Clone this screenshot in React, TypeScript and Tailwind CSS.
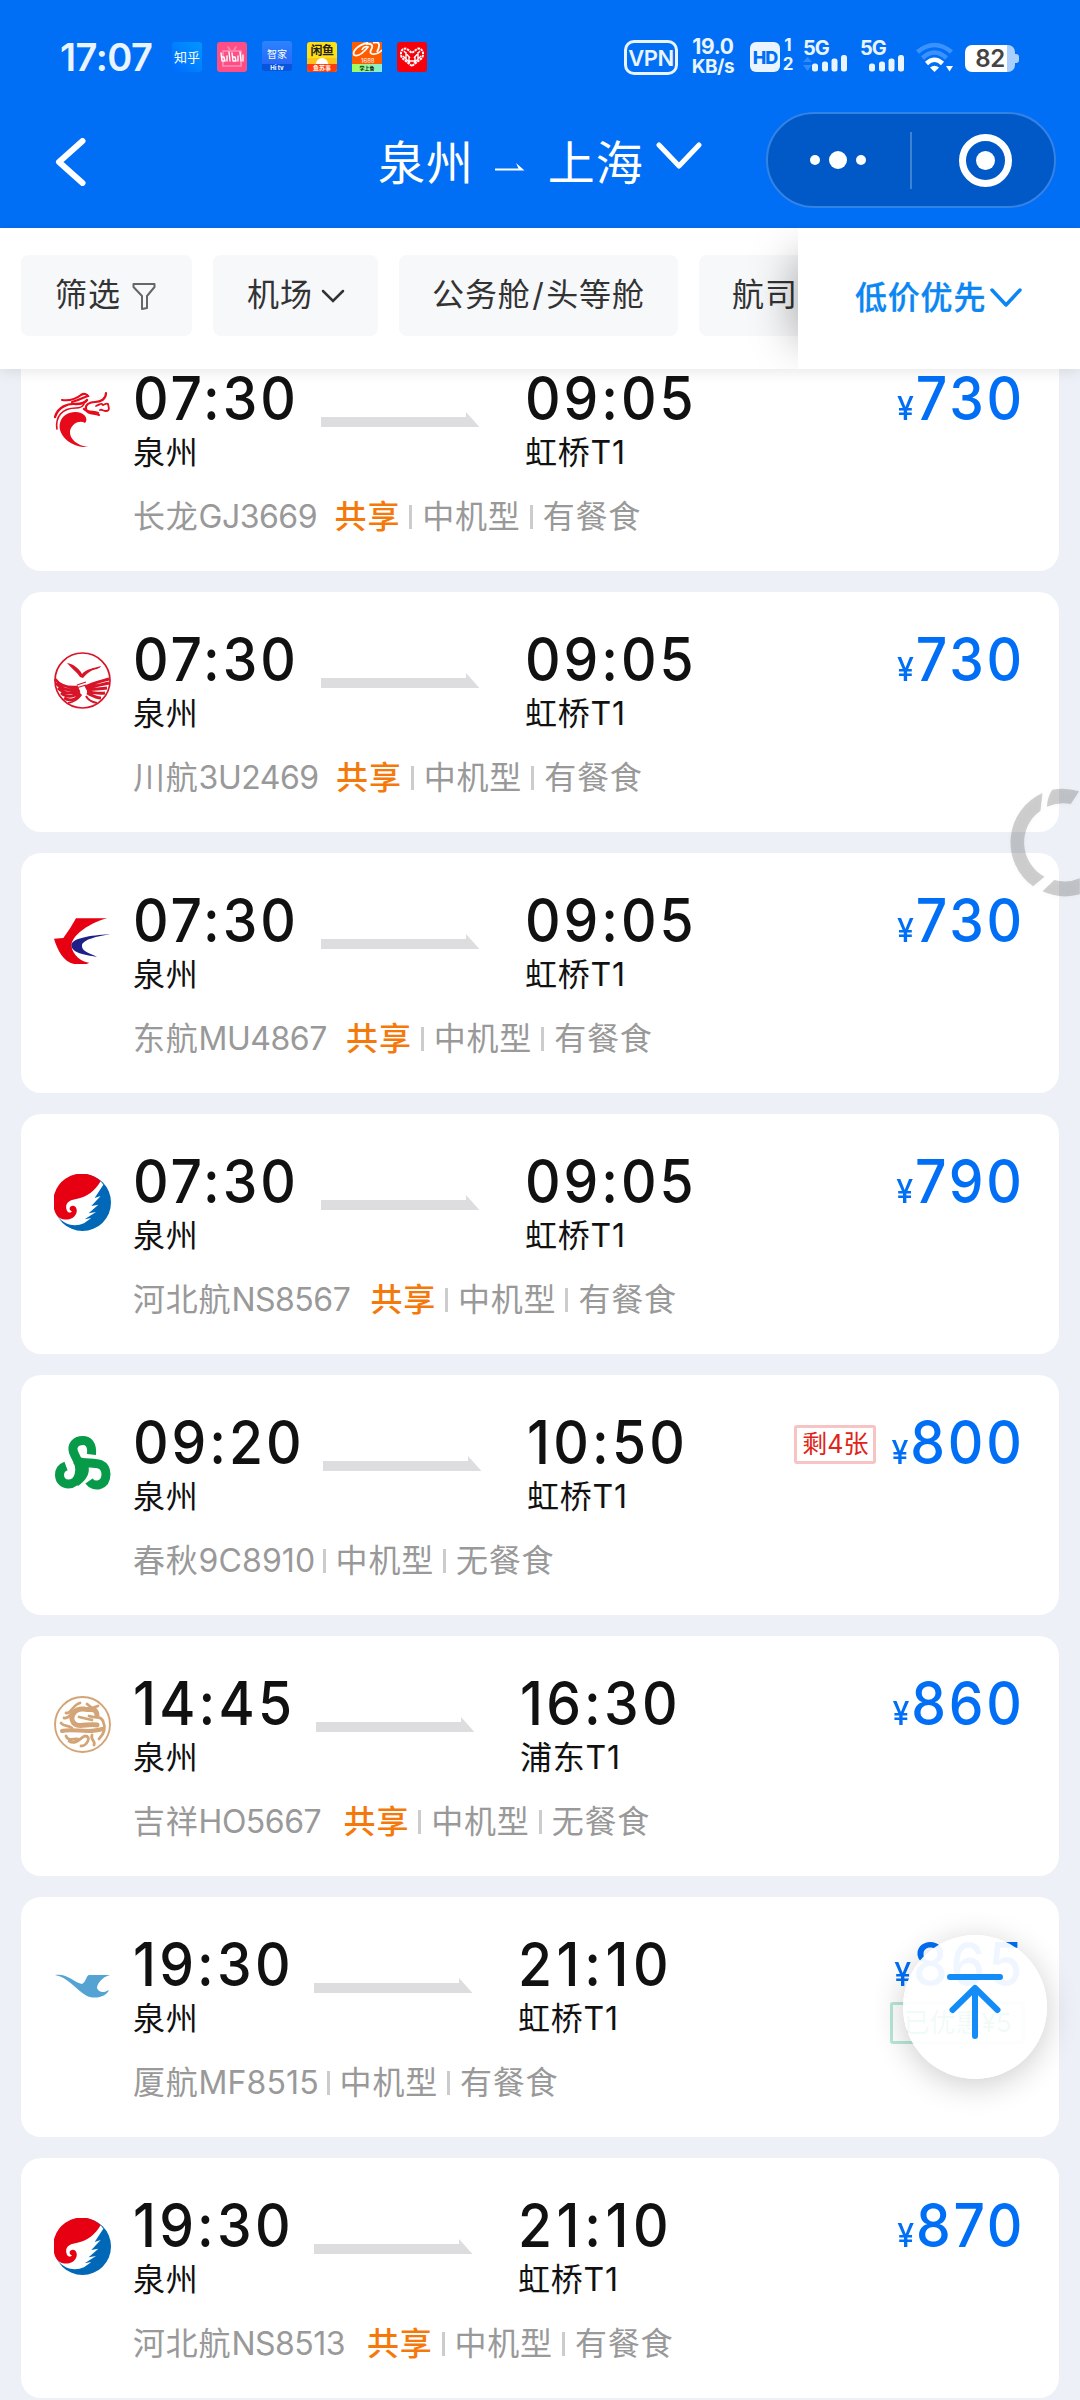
import React from "react";

type Airline = "loong" | "sichuan" | "eastern" | "hebei" | "spring" | "juneyao" | "xiamen";

type Flight = {
  airline: Airline;
  depart: string;
  arrive: string;
  port: string;
  carrier: string;
  code: string;
  codeWidth: number;
  departWidth: number;
  shared: boolean;
  meal: string;
  price: string;
  left?: string;
  discount?: string;
};

const flights: Flight[] = [
  { airline: "loong", depart: "07:30", arrive: "09:05", port: "虹桥T1", carrier: "长龙", code: "GJ3669", codeWidth: 116, departWidth: 188, shared: true, meal: "有餐食", price: "730" },
  { airline: "sichuan", depart: "07:30", arrive: "09:05", port: "虹桥T1", carrier: "川航", code: "3U2469", codeWidth: 117.5, departWidth: 188, shared: true, meal: "有餐食", price: "730" },
  { airline: "eastern", depart: "07:30", arrive: "09:05", port: "虹桥T1", carrier: "东航", code: "MU4867", codeWidth: 127.5, departWidth: 188, shared: true, meal: "有餐食", price: "730" },
  { airline: "hebei", depart: "07:30", arrive: "09:05", port: "虹桥T1", carrier: "河北航", code: "NS8567", codeWidth: 119, departWidth: 188, shared: true, meal: "有餐食", price: "790" },
  { airline: "spring", depart: "09:20", arrive: "10:50", port: "虹桥T1", carrier: "春秋", code: "9C8910", codeWidth: 115, departWidth: 190, shared: false, meal: "无餐食", price: "800", left: "剩4张" },
  { airline: "juneyao", depart: "14:45", arrive: "16:30", port: "浦东T1", carrier: "吉祥", code: "HO5667", codeWidth: 125, departWidth: 183, shared: true, meal: "无餐食", price: "860" },
  { airline: "xiamen", depart: "19:30", arrive: "21:10", port: "虹桥T1", carrier: "厦航", code: "MF8515", codeWidth: 119, departWidth: 181, shared: false, meal: "有餐食", price: "865", discount: "已优惠¥5" },
  { airline: "hebei", depart: "19:30", arrive: "21:10", port: "虹桥T1", carrier: "河北航", code: "NS8513", codeWidth: 115.5, departWidth: 181, shared: true, meal: "有餐食", price: "870" },
];

function Logo({ airline }: { airline: Airline }) {
  const cls = "h-[57px] w-[57px] shrink-0";
  switch (airline) {
    case "loong":
      return (
        <svg viewBox="0 0 57 57" className={cls} fill="none" stroke="#e60a1b" strokeLinecap="round">
          <path d="M34 56C16 57 3 43 6 32C8 22 20 19 27 22C32 24 34 29 31 32C26 29 18 32 16 40C15 48 24 55 34 56Z" fill="#e60a1b" stroke="none" />
          <path d="M3 38C1 26 8 17 22 17C26 17 29 15 30 13" strokeWidth="1.600" />
          <path d="M1 26C4 16 14 12 22 13C27 13 31 12 33 9" strokeWidth="2.400" />
          <path d="M8 9C16 10 22 8 27 4C30 2 33 3 34 5C30 6 26 9 18 11" strokeWidth="2.200" />
          <path d="M52 2C52 8 47 11 41 11C35 11 31 14 32 18C33 23 39 22 45 24" strokeWidth="2.200" />
          <path d="M30 18C34 22 40 20 44 22" strokeWidth="2.400" />
          <path d="M42 15C45 14 47 12 48 13C49 16 52 11 54 13C55 17 56 20 52 20C49 20 48 18 46 19" strokeWidth="1.800" />
        </svg>
      );
    case "sichuan":
      return (
        <svg viewBox="0 0 57 57" className={cls} fill="none" stroke="#d81528">
          <circle cx="28.500" cy="28.500" r="27.500" strokeWidth="1.700" />
          <path d="M13 11C19 12 25 16 28 22C32 17 40 16 47 14C46 17 41 17 37 19C33 21 31 24 29 26L26 25C23 20 18 17 13 11Z" fill="#d81528" stroke="none" />
          <path d="M1 27C6 34 14 36 24 35M2 31C8 38 15 39 25 37M4 36C10 42 16 42 26 39M7 41C13 46 18 45 26 41M10 46C16 50 21 48 27 42M55 27C48 29 38 31 31 35M55 31C48 33 38 34 32 37M53 36C46 37 38 37 33 38M51 41C44 42 38 40 33 40M47 46C42 46 37 43 33 41" strokeWidth="2.900" />
          <path d="M23 33L32 30M22 36L32 33" strokeWidth="1.200" />
          <path d="M14 51C20 50 24 47 27 43M43 51C37 50 34 48 32 44" strokeWidth="2" />
        </svg>
      );
    case "eastern":
      return (
        <svg viewBox="0 0 171 171" className={cls}>
          <path d="M0 77L28 75Q50 46 66 16H160C112 28 54 64 52 98C56 128 84 147 106 149L98 153H60C28 146 10 110 0 77Z" fill="#e60012" />
          <path d="M170 63C130 66 50 72 52 98C54 118 90 126 129 131C101 121 82 112 84 97C86 80 130 70 170 63Z" fill="#1d2088" />
        </svg>
      );
    case "hebei":
      return (
        <svg viewBox="0 0 171 171" className={cls}>
          <circle cx="85.500" cy="85.500" r="85.500" fill="#0068b7" />
          <path d="M4 116C22 150 58 162 90 148L112 132L92 136L126 114L104 118L133 92L112 96L140 66L122 72L148 32L140 22C100 60 30 60 16 110Z" fill="#fff" />
          <path d="M140 21A85 85 0 0 0 4 116C14 142 54 144 66 120C74 102 60 90 49 98C44 104 48 111 54 112C50 119 39 116 37 104C33 84 50 77 70 74C100 68 124 50 140 21Z" fill="#e60012" />
        </svg>
      );
    case "spring":
      return (
        <svg viewBox="0 0 57 57" className={cls} fill="none" stroke="#079a48" strokeWidth="9">
          <path d="M37.500 19.500C38.500 9 34 5.500 29 5.500C21 5.500 17.500 11 19.500 17C22 24 28 30 25 40C22 52 6 52 5.500 40C5.500 35 8 32.500 12 31" />
          <path d="M22 25C31 32 51 22 52 39C52 51 40 53 35 46" />
          <path d="M31 31C33 40 25 46 22 48" strokeWidth="7" />
        </svg>
      );
    case "juneyao":
      return (
        <svg viewBox="0 0 57 57" className={cls} fill="none" stroke="#d3a576" strokeLinecap="round">
          <circle cx="28.500" cy="28.500" r="27.500" strokeWidth="1.900" />
          <path d="M43 19C42 10 34 15 30 13C20 12 16 21 19 26C23 33 34 27 43 29" strokeWidth="5" />
          <path d="M8 35C20 32 34 38 48 33" strokeWidth="4" />
          <path d="M12 17C18 18 18 9 26 7M10 22C16 23 17 16 23 15M33 8L38 12L44 10M35 20C42 23 46 19 49 25C52 32 50 38 45 43M7 27C10 31 14 29 18 32M12 40C14 46 20 42 24 43M15 45C22 50 28 40 31 40C38 40 33 50 27 50M38 39C36 44 42 45 40 49M25 21L38 24" strokeWidth="2.800" />
        </svg>
      );
    case "xiamen":
      return (
        <svg viewBox="0 0 57 57" className={cls}>
          <path d="M1 18C13 16 21 26 28 27C32 25 32 19 35 18H56C48 20 43 27 43 31C45 36 50 36 55 33C53 39 42 43 33 39C22 33 14 20 1 18Z" fill="#54a3d2" />
        </svg>
      );
  }
}

function FlightArrow() {
  return (
    <svg viewBox="0 0 158 15" className="mt-[81px] h-[15px] w-[158px] shrink-0" fill="#dddddf">
      <path d="M0 5H145V0L158.500 15H0Z" />
    </svg>
  );
}

function Divider() {
  return <span className="ml-[9px] mr-[10px] h-6 w-[3px] shrink-0 bg-[#cccccc]" />;
}

// The digit "1" is narrow, so times that hold two of them get wider tracking.
const timeTracking = ["tracking-[3.200px]", "tracking-[3.500px]", "tracking-[5px]"];

function Time({ value }: { value: string }) {
  const ones = Math.min(value.split("1").length - 1, 2);
  return (
    <div
      className={
        "w-0 origin-left scale-x-[0.92] whitespace-nowrap text-[60px] font-medium leading-[60px] [font-feature-settings:'calt'_0] " +
        timeTracking[ones]
      }
    >
      {value}
    </div>
  );
}

function FlightCard({ flight }: { flight: Flight }) {
  return (
    <article className="flex h-[240px] shrink-0 rounded-[20px] bg-white pl-[33px] pr-9">
      <div className="pt-[60px]">
        <Logo airline={flight.airline} />
      </div>
      <div className="ml-[21px] flex grow flex-col">
        <div className="flex h-[139px] items-start">
          <div className="ml-px shrink-0 pt-[37px]" style={{ width: flight.departWidth }}>
            <Time value={flight.depart} />
            <div className="mt-[9px] leading-8 tracking-[0.800px]">泉州</div>
          </div>
          <FlightArrow />
          <div className="ml-[46px] shrink-0 pt-[37px]">
            <Time value={flight.arrive} />
            <div className="mt-[9px] leading-8 tracking-[0.800px]">{flight.port}</div>
          </div>
          <div className="ml-auto flex flex-col items-end pt-[37px] text-[#006ff6]">
            <div className="flex items-start">
              {flight.left && (
                <span className="mr-[4px] mt-[13px] flex h-[39px] w-[82px] items-center justify-center rounded-[3px] border-[3px] border-[#f7c3c3] text-[25px] leading-none text-[#df2417]">
                  {flight.left}
                </span>
              )}
              <span className="-mr-[2px] origin-right scale-x-[0.92] whitespace-nowrap text-[60px] font-medium leading-[60px] tracking-[3px]">
                <span className="mr-[2px] text-[33px] tracking-normal">¥</span>
                {flight.price}
              </span>
            </div>
            {flight.discount && (
              <span className="-mr-[2px] -mt-[2px] flex h-[42px] w-[135px] shrink-0 items-center justify-center whitespace-nowrap rounded-[3px] border-[3px] border-[#b8e8d5] text-[26px] leading-none text-[#08b172]">
                {flight.discount}
              </span>
            )}
          </div>
        </div>
        <div className="ml-px mt-[31px] flex h-8 items-center whitespace-nowrap leading-8 tracking-[0.800px] text-[#999999]">
          <span>{flight.carrier}</span>
          <span
            className={"shrink-0 " + (flight.shared ? "tracking-[-0.500px]" : "tracking-[0.100px]")}
            style={{ width: flight.codeWidth }}
          >
            {flight.code}
          </span>
          {flight.shared && <span className="ml-[20px] font-medium text-[#f5790a]">共享</span>}
          <Divider />
          <span>中机型</span>
          <Divider />
          <span>{flight.meal}</span>
        </div>
      </div>
    </article>
  );
}

function SignalBars({ data }: { data?: boolean }) {
  return (
    <div className="w-[44px] text-[#e9f4ff]">
      <div className="h-[15px] text-[20px] font-bold leading-[15px] tracking-[-1px]">5G</div>
      <svg viewBox="0 0 44 17" className="-mt-px h-[17px] w-[44px]" fill="currentColor">
        {data && <path d="M0 7L4.500 2L9 7ZM0 10H9L4.500 16Z" fill="#2f8bff" />}
        <rect x="9" y="8.500" width="6" height="8" rx="2.500" />
        <rect x="19" y="6.500" width="6" height="10" rx="2.500" />
        <rect x="28.500" y="3.500" width="6" height="13" rx="2.500" />
        <rect x="38" y="0" width="6" height="16.500" rx="2.500" />
      </svg>
    </div>
  );
}

function AppIcons() {
  return (
    <div className="ml-4 flex h-[30px] gap-[15px] text-center text-white">
      <span className="h-[30px] w-[30px] rounded-[3px] bg-gradient-to-tr from-[#006aff] to-[#0096ff] text-[13px] leading-[31px]">知乎</span>
      <svg viewBox="0 0 30 30" className="h-[30px] w-[30px]" fill="none" stroke="#fff" strokeLinecap="round" strokeLinejoin="round">
        <rect width="30" height="30" rx="3" fill="#ff4e86" stroke="none" />
        <path d="M6 9H24V24H6ZM11 5L13 8M19 5L17 8" stroke="#ff80a8" strokeWidth="2" />
        <path d="M4 11L5 19H8L7 15H5M10 14V19M12 10L13 19M15 11L16 19H19L18 15H16M21 14V19M23 10L24 19M26 13V19" strokeWidth="1.400" />
      </svg>
      <span className="flex h-[30px] w-[30px] -translate-y-px flex-col rounded-[3px] bg-gradient-to-b from-[#2c83ff] to-[#2860f4]">
        <span className="h-[23px] text-[10px] leading-[26px]">智家</span>
        <span className="h-[7px] rounded-b-[3px] bg-[#0755dc] text-[6px] font-bold leading-[7px]">Hi tv</span>
      </span>
      <span className="flex h-[30px] w-[30px] flex-col overflow-hidden rounded-[3px] bg-[#ffe014] font-bold">
        <span className="h-4 whitespace-nowrap text-[12px] leading-[17px] tracking-[-0.500px] text-[#222]">闲鱼</span>
        <span className="flex h-[6px] justify-center bg-[#ffc21c]"><i className="h-[6px] w-[12px] rounded-t-full bg-white" /></span>
        <span className="h-2 bg-[#ff3d0c] text-[6px] leading-2">鱼苏事</span>
      </span>
      <span className="flex h-[30px] w-[30px] flex-col bg-[#ff5c00]">
        <svg viewBox="0 0 30 22" className="h-[22px] w-[30px]" fill="none" stroke="#fff" strokeWidth="1.800">
          <path d="M16 1C7 2 0 9 2 13C6 15 12 10 16 5C14 4 11 5 10 8M14 2C19 1 22 3 19 8C16 14 26 13 30 8M21 1C27-1 29 2 25 10" />
          <text x="9" y="21" fontSize="6" fill="#fff" stroke="none">1688</text>
        </svg>
        <span className="h-2 bg-gradient-to-r from-[#9dff4b] to-[#8aecd4] text-[5px] font-bold leading-2 text-[#111]">学上鲁</span>
      </span>
      <svg viewBox="0 0 30 30" className="h-[30px] w-[30px]" fill="none" stroke="#fff">
        <rect width="30" height="30" rx="3" fill="#f5000b" stroke="none" />
        <path d="M15 24L5 16C2 10 6 5 10 7L15 11L20 7C24 5 28 10 25 16Z" strokeWidth="2" strokeDasharray="2.500 .8" />
        <path d="M7 9L13 16M6 14L13 21M23 9L17 16M24 14L17 21M9 18V10M21 18V10M12 14V19H18V14" strokeWidth="1.400" />
      </svg>
    </div>
  );
}

function StatusBar() {
  return (
    <div className="flex h-[72px] items-end pl-[60px] text-[#e9f4ff]">
      <div className="flex h-[34px] w-[96px] items-end text-[38px] font-semibold leading-[38px] tracking-[-0.500px]">
        <span className="translate-y-1">17:07</span>
      </div>
      <AppIcons />
      <div className="ml-[197px] flex h-[35px] w-[54px] translate-y-[3px] items-center justify-center rounded-[10px] border-[3px] border-[#e9f4ff] text-[22px] font-semibold leading-none tracking-[-0.500px]">
        VPN
      </div>
      <div className="ml-3 w-[46px] translate-y-[5px] whitespace-nowrap text-center font-bold leading-[20px]">
        <div className="text-[21px] tracking-[-0.300px]">19.0</div>
        <div className="text-[19px] tracking-[-0.500px]">KB/s</div>
      </div>
      <div className="ml-[14px] flex h-[30px] w-[30px] items-center justify-center rounded-[6px] bg-[#e9f4ff] text-[18px] font-extrabold tracking-[-1px] text-[#006ff6]">HD</div>
      <div className="ml-[2px] w-3 text-center text-[17px] font-bold leading-[17px]">
        <div className="-translate-y-px">1</div>
        <div className="translate-y-px">2</div>
      </div>
      <div className="ml-[9px]"><SignalBars data /></div>
      <div className="ml-[13px]"><SignalBars /></div>
      <svg viewBox="0 0 38 30" className="ml-[12px] h-[30px] w-[38px]" fill="none">
        <path d="M1.500 10Q18.500-4 35.500 10M6.500 16Q18.500 5 30.500 16" stroke="#3b92ff" strokeWidth="4.500" />
        <path d="M10.500 21.500Q18.500 14 26.500 21.500" stroke="#fff" strokeWidth="4.500" />
        <path d="M14 25.500Q18.500 22 23 25.500L18.500 30ZM30 24H37L33.500 29.500Z" fill="#fff" />
      </svg>
      <div className="ml-[11px] flex h-[27px] w-[50px] items-center justify-center rounded-[7px] bg-gradient-to-r from-white from-[83%] to-[#a9cfff] to-[83%] text-[24px] font-semibold leading-[27px] tracking-[-0.500px] text-[#444]">
        82
      </div>
      <div className="mb-[9px] h-[9px] w-[4px] rounded-r-[3px] bg-[#a9cfff]" />
    </div>
  );
}

function Header() {
  return (
    <header className="h-[228px] bg-[#006ff6] text-white">
      <StatusBar />
      <div className="flex h-[156px] items-start">
        <svg viewBox="0 0 30 48" className="ml-[55px] mt-[66px] h-12 w-[31px]" fill="none" stroke="#fff" strokeWidth="6" strokeLinecap="round" strokeLinejoin="round">
          <path d="M27 3L3.500 24L27 45" />
        </svg>
        <div className="ml-[292px] mt-[67px] flex h-12 items-center text-[47px] leading-[48px] tracking-[0.900px]">
          <span>泉州</span>
          <svg viewBox="0 0 30 8" className="ml-[21px] mt-[8px] h-2 w-[30px]" fill="#fff">
            <path d="M0 5.500H23.500L21 0L29.500 7.500H0Z" />
          </svg>
          <span className="ml-[23px]">上海</span>
          <svg viewBox="0 0 46 28" className="mb-[14px] ml-[12px] h-7 w-[46px]" fill="none" stroke="#fff" strokeWidth="5" strokeLinecap="round" strokeLinejoin="round">
            <path d="M3 3L23 24L43 3" />
          </svg>
        </div>
        <div className="ml-auto mr-6 mt-10 flex h-24 w-[290px] items-center rounded-full border-2 border-[#3382e6] bg-[#0059c6]">
          <div className="flex w-[142px] items-center justify-center gap-[9px] pr-[2px]">
            <i className="h-[10px] w-[10px] rounded-full bg-white" />
            <i className="h-[18px] w-[18px] rounded-full bg-white" />
            <i className="h-[10px] w-[10px] rounded-full bg-white" />
          </div>
          <div className="h-[57px] w-[2px] bg-[#3f83d4]" />
          <div className="ml-[47px] flex h-[53px] w-[53px] items-center justify-center rounded-full border-[7px] border-white">
            <i className="h-[19px] w-[19px] rounded-full bg-white" />
          </div>
        </div>
      </div>
    </header>
  );
}

function FilterBar() {
  const chip = "flex h-[81px] shrink-0 items-center rounded-[8px] bg-[#f7f8fa] pb-px";
  return (
    <div className="relative z-10 flex h-[141px] bg-white text-[#333] shadow-[0_2px_14px_rgba(0,0,0,0.1)]">
      <div className="relative flex w-[798px] shrink-0 gap-[21px] overflow-hidden whitespace-nowrap pl-[21px] pt-[27px] tracking-[0.900px]">
        <div className={chip + " w-[171px] pl-[34px]"}>
          筛选
          <svg viewBox="0 0 24 28" className="ml-[11px] mt-[2px] h-7 w-6" fill="none" stroke="#666" strokeWidth="2" strokeLinejoin="round">
            <path d="M1.500 2H22.500V5L15 14V26L10 27V14L1.500 5Z" />
          </svg>
        </div>
        <div className={chip + " w-[165px] pl-[34px]"}>
          机场
          <svg viewBox="0 0 24 14" className="ml-[8px] mt-[2px] h-[14px] w-6" fill="none" stroke="#333" strokeWidth="2.500" strokeLinecap="round">
            <path d="M2 2L12 12L22 2" />
          </svg>
        </div>
        <div className={chip + " w-[279px] pl-[33px]"}>
          公务舱<span className="mx-[1.500px]">/</span>头等舱
        </div>
        <div className={chip + " w-[171px] pl-[33px]"}>航司</div>
        <div className="absolute left-full top-[32px] h-[78px] w-20 shadow-[0_0_46px_2px_rgba(0,0,0,0.35)]" />
      </div>
      <div className="relative flex grow items-center bg-white pb-px pl-[57px] font-medium tracking-[0.800px] text-[#0b86f2]">
        <span className="[-webkit-text-stroke:0.300px_currentColor]">低价优先</span>
        <svg viewBox="0 0 32 20" className="ml-[4px] h-5 w-8" fill="none" stroke="currentColor" strokeWidth="3.500" strokeLinecap="round" strokeLinejoin="round">
          <path d="M2 2L16 17L30 2" />
        </svg>
      </div>
    </div>
  );
}

function LoadingRing() {
  return (
    <svg viewBox="790 130 230 360" className="absolute right-0 top-[783px] z-20 h-[120px] w-[77px] drop-shadow-sm" fill="#000" fillOpacity="0.18">
      <path d="M908 160A162 162 0 0 0 880 440L914 411A117 117 0 0 1 902 213Z" />
      <path d="M937 150A162 162 0 0 1 1018 155L993 193A117 117 0 0 0 921 201Q923 172 937 150Z" />
      <path d="M908 455A162 162 0 0 0 1020 464V416A117 117 0 0 1 943 421Z" />
    </svg>
  );
}

function BackToTop() {
  return (
    <button className="absolute left-[903px] top-[1935px] z-20 flex h-36 w-36 items-center justify-center rounded-full bg-white/94 shadow-[0_6px_32px_rgba(0,0,0,0.2)]">
      <svg viewBox="0 0 56 66" className="h-[66px] w-14" fill="none" stroke="#138cf8" strokeWidth="6" strokeLinecap="round" strokeLinejoin="round">
        <path d="M3 3H53M28 62V14M5.500 36L28 14L50.500 36" />
      </svg>
    </button>
  );
}

export default function App() {
  return (
    <div className="relative flex h-[2400px] w-[1080px] flex-col overflow-hidden bg-[#edf0f6] font-['Inter','Noto_Sans_CJK_SC',sans-serif] text-[32px] text-[#111]">
      <Header />
      <FilterBar />
      <main className="-mt-[38px] flex grow flex-col gap-[21px] px-[21px]">
        {flights.map((flight, i) => (
          <FlightCard key={i} flight={flight} />
        ))}
      </main>
      <LoadingRing />
      <BackToTop />
    </div>
  );
}
